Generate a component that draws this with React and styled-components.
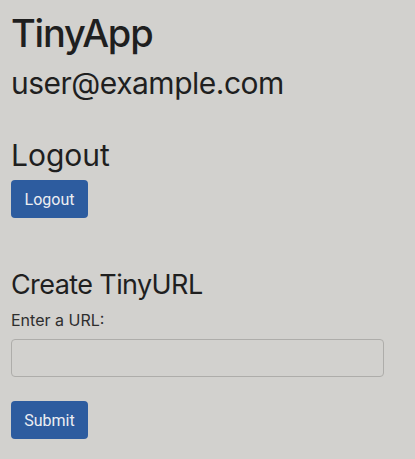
import React from 'react';
import styled, { createGlobalStyle } from 'styled-components';

const GlobalStyle = createGlobalStyle`
    body {
        margin: 0;
        background-color: #d2d1ce;
        font-family: Inter, "Noto Sans", sans-serif;
        color: #1f1f1f;
    }
`;

const Page = styled.div`
    padding: 9px 11px 20px 11px;
    display: flex;
    flex-direction: column;
    align-items: flex-start;
`;

const Title = styled.h1`
    margin: 0;
    font-size: 38px;
    font-weight: 500;
    letter-spacing: -1.2px;
    line-height: 48px;
`;

const Heading = styled.h2`
    margin: ${(p) => p.$top || 0}px 0 0 0;
    font-size: ${(p) => p.$size}px;
    font-weight: 400;
    letter-spacing: ${(p) => p.$track || 0}px;
    line-height: 1.2;
`;

const Button = styled.button`
    margin-top: ${(p) => p.$top || 0}px;
    width: 77px;
    height: 38px;
    border: none;
    border-radius: 4px;
    background-color: #2d5c9f;
    color: #eceef2;
    font-family: Roboto, Inter, sans-serif;
    font-size: 16px;
    cursor: pointer;
`;

const Form = styled.form`
    align-self: stretch;
    display: flex;
    flex-direction: column;
    align-items: flex-start;
`;

const Label = styled.label`
    margin-top: 9px;
    font-size: 16px;
    color: #2e2e2e;
`;

const Input = styled.input`
    margin-top: 9px;
    width: 373px;
    height: 38px;
    box-sizing: border-box;
    border: 1px solid #aeadaa;
    border-radius: 4px;
    background: transparent;
`;

export default function App() {
    return (
        <React.Fragment>
            <GlobalStyle />
            <Page>
                <Title>TinyApp</Title>
                <Heading $size={30} $track={-0.5} $top={8}>user@example.com</Heading>
                <Heading $size={30} $top={36}>Logout</Heading>
                <Button $top={7}>Logout</Button>
                <Form onSubmit={(e) => e.preventDefault()}>
                    <Heading $size={27} $track={-0.6} $top={51}>Create TinyURL</Heading>
                    <Label>Enter a URL:</Label>
                    <Input type="text" />
                    <Button $top={24} type="submit">Submit</Button>
                </Form>
            </Page>
        </React.Fragment>
    );
}
